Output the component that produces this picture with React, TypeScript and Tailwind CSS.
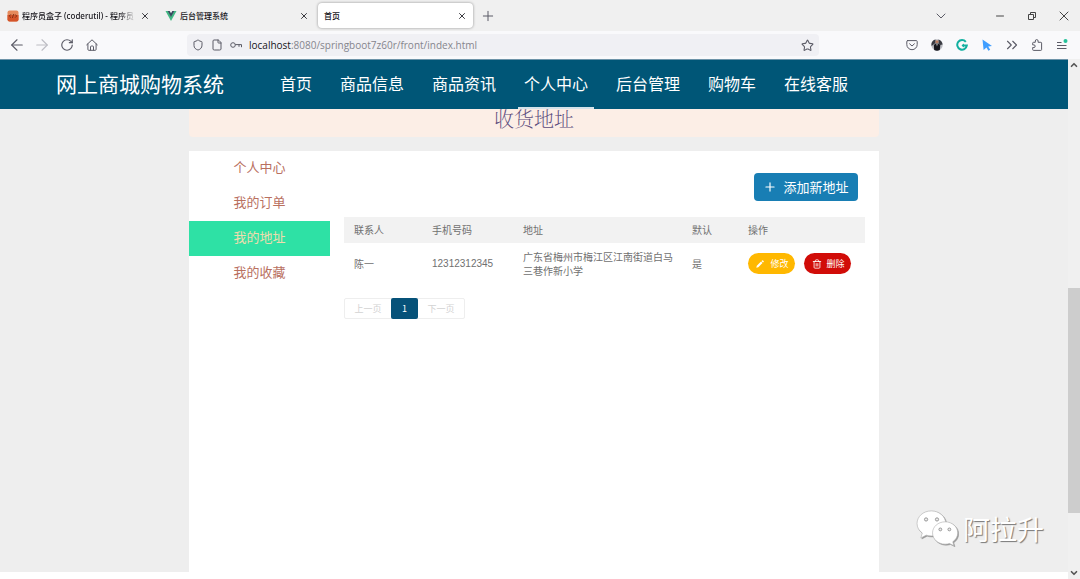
import type { ReactNode } from "react";
import {
  ArrowLeft,
  ArrowRight,
  ChevronDown,
  ChevronsRight,
  ChevronUp,
  File,
  Minus,
  Plus,
  RotateCw,
  Shield,
  Star,
  Trash2,
  X,
} from "lucide-react";
import { clsx } from "clsx";

const navItems = ["首页", "商品信息", "商品资讯", "个人中心", "后台管理", "购物车", "在线客服"];
const sideItems = ["个人中心", "我的订单", "我的地址", "我的收藏"];
const addresses = [
  {
    name: "陈一",
    phone: "12312312345",
    address: "广东省梅州市梅江区江南街道白马三巷作新小学",
    isDefault: "是",
  },
];

function CodeLogo() {
  return (
    <svg className="size-3 shrink-0" viewBox="0 0 12 12" aria-hidden="true">
      <rect x="0.5" y="0.5" width="11" height="11" rx="2" fill="#e58a5c" />
      <path d="M.5 5h11v4.500q0 2-2 2h-7q-2 0-2-2z" fill="#d4552a" />
      <path d="M4 4.300 2.300 6 4 7.700M8 4.300 9.700 6 8 7.700M6.600 4 5.400 8" fill="none" stroke="#7a2c14" strokeWidth="0.9" />
    </svg>
  );
}

function VueLogo() {
  return (
    <svg className="size-3 shrink-0" viewBox="0 0 12 12" aria-hidden="true">
      <path d="M0.5 1H3L6 6.2 9 1h2.5L6 11z" fill="#41b883" />
      <path d="M2.7 1h2L6 3.2 7.3 1h2L6 6.9z" fill="#35495e" />
    </svg>
  );
}

function HomeIcon() {
  return (
    <svg className="size-3" viewBox="0 0 12 12" fill="none" stroke="currentColor" strokeLinejoin="round" strokeLinecap="round" aria-hidden="true">
      <path d="M0.7 5.8 6 0.8l5.3 5M1.9 5v5.4q0 .9.9.9h6.4q.9 0 .9-.9V5" />
      <path d="M4.5 11V8q0-1 1-1h1q1 0 1 1v3" />
    </svg>
  );
}

function KeyIcon() {
  return (
    <svg className="size-3 shrink-0" viewBox="0 0 12 12" fill="none" stroke="currentColor" aria-hidden="true">
      <circle cx="3" cy="6" r="2.3" />
      <path d="M5.3 5.6h6.2v2.6M9 5.6v2.2" />
    </svg>
  );
}

function PocketIcon() {
  return (
    <svg className="size-3" viewBox="0 0 12 12" fill="none" stroke="currentColor" strokeLinecap="round" strokeLinejoin="round" aria-hidden="true">
      <path d="M1.7 1.6h8.6q.9 0 .9.9V5.5a5.2 5.2 0 0 1-10.4 0V2.5q0-.9.9-.9z" />
      <path d="m3.6 4.8 2.4 2.2 2.4-2.2" />
    </svg>
  );
}

function AvatarIcon() {
  return (
    <svg className="size-3" viewBox="0 0 12 12" aria-hidden="true">
      <circle cx="6" cy="6" r="5.7" fill="#b9bac0" />
      <path d="M.4 5Q1 1.500 4.500.6V4L2.500 5.500.6 7zM7.500.6Q11 1.800 11.600 5.500L9 6 7.500 4z" fill="#3a3b42" />
      <path d="M2.800 6 5 4.300h2L9.300 6 8.800 11Q6 12.400 3.200 11z" fill="#15161c" />
      <circle cx="6" cy="2.800" r="1.500" fill="#b97b5e" />
      <path d="m5.400 4.500.6 3 .6-3z" fill="#fff" />
    </svg>
  );
}

function GrammarIcon() {
  return (
    <svg className="size-3" viewBox="0 0 12 12" fill="none" stroke="#12b0a0" strokeWidth="2" aria-hidden="true">
      <path d="M9.800 2.800A4.800 4.800 0 1 0 10.800 6.600H6.500" />
      <path d="M8 4.600 5.500 6.600 8 8.600z" fill="#12b0a0" stroke="none" />
    </svg>
  );
}

function CursorIcon() {
  return (
    <svg className="size-3" viewBox="0 0 12 12" aria-hidden="true">
      <path d="M1.500.5 11 7 7.200 7.600 9.200 10.800 7.400 11.800 5.500 8.500 2.600 11z" fill="#409eff" />
    </svg>
  );
}

function PuzzleIcon() {
  return (
    <svg className="size-3" viewBox="0 0 12 12" fill="none" stroke="currentColor" strokeLinejoin="round" aria-hidden="true">
      <path d="M4.300 3.300V2a1.400 1.400 0 0 1 2.800 0v1.300h2.700q.8 0 .8.8v6.500q0 .8-.8.8H2.500q-.8 0-.8-.8V8.500h1.200a1.300 1.300 0 0 0 0-2.600H1.700V4.100q0-.8.8-.8z" />
    </svg>
  );
}

function MenuIcon() {
  return (
    <svg className="size-3" viewBox="0 0 12 12" fill="none" stroke="currentColor" aria-hidden="true">
      <path d="M1 3.500h4.500M1 6.500h9.500M1 9.500h9.500" />
      <circle cx="9.500" cy="2" r="2" fill="#26c29a" stroke="none" />
    </svg>
  );
}

function RestoreIcon() {
  return (
    <svg className="size-2" viewBox="0 0 8 8" fill="none" stroke="currentColor" aria-hidden="true">
      <path d="M.5 2.500h5v5h-5zM2.500 2.500v-2h5v5h-2" />
    </svg>
  );
}

function PencilIcon() {
  return (
    <svg className="size-2" viewBox="0 0 8 8" fill="currentColor" aria-hidden="true">
      <path d="M.3 7.700.8 5.800 5 1.600l1.500 1.500-4.200 4.200zM5.500 1.100 6.200.4q.4-.3.8.1l.6.6q.4.400 0 .8l-.6.700z" />
    </svg>
  );
}

function WechatIcon() {
  return (
    <svg className="mb-1 h-[38px] w-[42px] drop-shadow-[1px_1px_0px_#999]" viewBox="0 0 44 40" fill="#fff" stroke="#aaa" strokeWidth="0.6" aria-hidden="true">
      <path d="M16 2C7.500 2 1 8 1 15.200c0 4.200 2 7.600 5.500 10L5 30.500l5.600-3c1.700.6 3.500.8 5.400.8 8.400 0 15.200-5.800 15.200-13.100S24.400 2 16 2z" />
      <path d="M30.500 13.500c-7.400 0-13.200 5.200-13.200 11.700S23.100 37 30.500 37c1.700 0 3.200-.2 4.700-.7l4.600 2.300-1.200-4.100c3.200-2.200 5.200-5.500 5.200-9.300 0-6.500-5.900-11.700-13.300-11.700z" />
      <g fill="#eee" stroke="#888" strokeWidth="0.9">
        <circle cx="10.500" cy="11" r="1.700" />
        <circle cx="22" cy="11" r="1.700" />
        <circle cx="25.500" cy="21.500" r="1.500" />
        <circle cx="35" cy="21.500" r="1.500" />
      </g>
    </svg>
  );
}

function IconButton({ label, className, children }: { label: string; className?: string; children: ReactNode }) {
  return (
    <button type="button" aria-label={label} className={clsx("flex size-3 shrink-0 items-center justify-center", className)}>
      {children}
    </button>
  );
}

function TabStrip() {
  return (
    <div className="flex h-[31px] shrink-0 items-center bg-[#f0f0f0] pr-2.5 text-[8px] font-medium text-[#15141a]">
      <div className="flex w-[158px] shrink-0 items-center gap-[3px] pr-[7px] pl-[7px]">
        <CodeLogo />
        <span className="min-w-0 flex-1 overflow-hidden whitespace-nowrap mask-r-from-85%">程序员盒子 (coderutil) - 程序员</span>
        <IconButton label="关闭标签页">
          <X className="size-2.5 shrink-0" strokeWidth={2} />
        </IconButton>
      </div>
      <div className="flex w-[160px] shrink-0 items-center gap-[3px] pr-2 pl-[7px]">
        <VueLogo />
        <span className="flex-1">后台管理系统</span>
        <IconButton label="关闭标签页">
          <X className="size-2.5 shrink-0" strokeWidth={2} />
        </IconButton>
      </div>
      <div className="flex h-[25px] w-[155px] shrink-0 items-center rounded-sm bg-white pr-[5px] pl-1.5 shadow-[0_0_3px_rgba(0,0,0,0.4)]">
        <span className="flex-1">首页</span>
        <IconButton label="关闭标签页">
          <X className="size-2.5 shrink-0" strokeWidth={2} />
        </IconButton>
      </div>
      <IconButton label="新建标签页" className="ml-[9px] text-[#5b5b66]">
        <Plus className="size-4 shrink-0" strokeWidth={1.5} />
      </IconButton>
      <div className="ml-auto flex items-center text-[#444]">
        <IconButton label="列出所有标签页" className="mr-[47px] text-[#5b5b66]">
          <ChevronDown className="size-4 shrink-0" strokeWidth={1.5} />
        </IconButton>
        <div className="flex gap-5">
          <IconButton label="最小化">
            <Minus className="size-3 shrink-0" strokeWidth={2} />
          </IconButton>
          <IconButton label="还原">
            <RestoreIcon />
          </IconButton>
          <IconButton label="关闭">
            <X className="size-4 shrink-0" strokeWidth={1.5} />
          </IconButton>
        </div>
      </div>
    </div>
  );
}

function Toolbar() {
  return (
    <div className="flex h-7 shrink-0 items-center bg-[#f9f9fb] pr-3 pl-[11px] text-[#5b5b66]">
      <div className="flex w-44 shrink-0 gap-[13px]">
        <IconButton label="后退">
          <ArrowLeft className="size-[18px] shrink-0" strokeWidth={1.5} />
        </IconButton>
        <IconButton label="前进" className="text-[#bdbdc4]">
          <ArrowRight className="size-[18px] shrink-0" strokeWidth={1.5} />
        </IconButton>
        <IconButton label="刷新">
          <RotateCw className="size-3.5 shrink-0" strokeWidth={2} />
        </IconButton>
        <IconButton label="主页">
          <HomeIcon />
        </IconButton>
      </div>
      <div className="mr-[87px] flex h-[22px] flex-1 items-center gap-[7px] rounded-sm bg-[#f0f0f4] pr-1.5 pl-[5px]">
        <Shield className="size-3 shrink-0" strokeWidth={2} />
        <File className="size-3 shrink-0" strokeWidth={2} />
        <KeyIcon />
        <p className="flex-1 font-['Open_Sans','Noto_Sans',sans-serif] text-[10px] text-[#85858d]">
          <span className="text-[#15141a]">localhost</span>:8080/springboot7z60r/front/index.html
        </p>
        <IconButton label="添加书签">
          <Star className="size-[13px] shrink-0" strokeWidth={2} />
        </IconButton>
      </div>
      <div className="flex gap-[13px]">
        <IconButton label="Pocket">
          <PocketIcon />
        </IconButton>
        <IconButton label="账户">
          <AvatarIcon />
        </IconButton>
        <IconButton label="语法检查">
          <GrammarIcon />
        </IconButton>
        <IconButton label="指针">
          <CursorIcon />
        </IconButton>
        <IconButton label="更多工具">
          <ChevronsRight className="size-[18px] shrink-0" strokeWidth={1.5} />
        </IconButton>
        <IconButton label="扩展">
          <PuzzleIcon />
        </IconButton>
        <IconButton label="菜单">
          <MenuIcon />
        </IconButton>
      </div>
    </div>
  );
}

function SiteHeader() {
  return (
    <header className="flex h-[50px] shrink-0 items-center border-t border-[#6d93a8] bg-[#005677] pl-14 text-white">
      <h1 className="w-[218px] shrink-0 pb-0.5 text-[21px] font-normal">网上商城购物系统</h1>
      <nav className="flex h-full gap-4">
        {navItems.map((item) => (
          <a
            key={item}
            href="#"
            className={clsx(
              "flex items-center border-b-2 px-1.5 pb-0.5 text-base whitespace-nowrap",
              item === "个人中心" ? "border-[#d5e3ea]" : "border-transparent"
            )}
          >
            {item}
          </a>
        ))}
      </nav>
    </header>
  );
}

function Sidebar() {
  return (
    <nav className="w-[141px] shrink-0">
      {sideItems.map((item) => (
        <a
          key={item}
          href="#"
          className={clsx(
            "flex h-[35px] items-center justify-center pb-[3px] text-[13px]",
            item === "我的地址" ? "bg-[#2ee1a5] text-[#f0dcae]" : "text-[#b9705f]"
          )}
        >
          {item}
        </a>
      ))}
    </nav>
  );
}

function AddressTable() {
  return (
    <table className="w-full table-fixed text-left text-[10px] leading-[14px] text-[#707070]">
      <colgroup>
        <col className="w-[15%]" />
        <col className="w-[91px]" />
        <col className="w-[169px]" />
        <col className="w-14" />
        <col className="w-[127px]" />
      </colgroup>
      <thead className="bg-[#f2f2f2]">
        <tr className="h-[26px]">
          {["联系人", "手机号码", "地址", "默认", "操作"].map((title) => (
            <th key={title} scope="col" className="pl-2.5 font-normal">
              {title}
            </th>
          ))}
        </tr>
      </thead>
      <tbody>
        {addresses.map((row) => (
          <tr key={row.phone} className="h-[41px]">
            <td className="pl-2.5">{row.name}</td>
            <td className="pl-2.5 font-['Liberation_Sans',sans-serif]">{row.phone}</td>
            <td className="pr-2 pl-2.5">{row.address}</td>
            <td className="pl-2.5">{row.isDefault}</td>
            <td className="pl-2.5">
              <div className="flex gap-[9px] text-[9px] text-white">
                <button type="button" className="flex h-[21px] w-[47px] shrink-0 items-center justify-center gap-1.5 rounded-full bg-[#ffb800] pl-0.5">
                  <PencilIcon />
                  修改
                </button>
                <button type="button" className="flex h-[21px] w-[47px] shrink-0 items-center justify-center gap-1 rounded-full bg-[#d10c08] pl-0.5">
                  <Trash2 className="size-2.5" strokeWidth={2} />
                  删除
                </button>
              </div>
            </td>
          </tr>
        ))}
      </tbody>
    </table>
  );
}

function Pagination() {
  return (
    <div className="mt-3.5 flex h-[21px] w-[121px] rounded-xs border border-[#eee] text-[9px] text-[#d2d2d2]">
      <button type="button" disabled className="flex-1">
        上一页
      </button>
      <button type="button" aria-current="page" className="-my-px w-[27px] rounded-xs bg-[#065279] text-white">
        1
      </button>
      <button type="button" disabled className="flex-1">
        下一页
      </button>
    </div>
  );
}

function Scrollbar() {
  return (
    <div className="flex w-3 shrink-0 flex-col items-center bg-[#f0f0f0] text-[#555]" aria-hidden="true">
      <ChevronUp className="my-px size-2.5 shrink-0" strokeWidth={4} />
      <div className="flex-[216]" />
      <div className="w-full flex-[224] bg-[#cdcdcd]" />
      <div className="flex-[54]" />
      <ChevronDown className="my-px size-2.5 shrink-0" strokeWidth={4} />
    </div>
  );
}

export default function App() {
  return (
    <div className="relative flex min-h-screen flex-col bg-white font-['Noto_Sans','Noto_Sans_CJK_SC',sans-serif]">
      <TabStrip />
      <Toolbar />
      <div className="flex flex-1">
        <div className="flex min-w-0 flex-1 flex-col font-['Noto_Sans_CJK_SC',sans-serif]">
          <SiteHeader />
          <main className="mb-[7px] flex flex-1 flex-col bg-[#eee]">
            <div className="mx-auto flex w-full max-w-[690px] flex-1 flex-col">
              <h2 className="h-7 rounded-b-sm bg-[#fceee6] text-center font-['Noto_Serif_CJK_SC','Liberation_Serif','Noto_Sans_CJK_SC',serif] text-xl leading-5 font-extralight text-[#5b4b7c]">
                收货地址
              </h2>
              <div className="mt-3.5 flex flex-1 bg-white">
                <Sidebar />
                <section className="mx-3.5 min-w-0 flex-1 pt-[22px]">
                  <div className="mb-4 flex justify-end pr-[7px]">
                    <button type="button" className="flex h-7 w-[104px] items-center justify-center gap-1.5 rounded bg-[#187eb4] text-[13px] text-white">
                      <Plus className="size-3.5" strokeWidth={2} />
                      添加新地址
                    </button>
                  </div>
                  <AddressTable />
                  <Pagination />
                </section>
              </div>
            </div>
          </main>
        </div>
        <Scrollbar />
      </div>
      <div className="absolute right-9 bottom-7 flex items-center gap-[5px] text-[27px] text-white">
        <WechatIcon />
        <span className="[text-shadow:1px_1px_1px_#777]">阿拉升</span>
      </div>
    </div>
  );
}
